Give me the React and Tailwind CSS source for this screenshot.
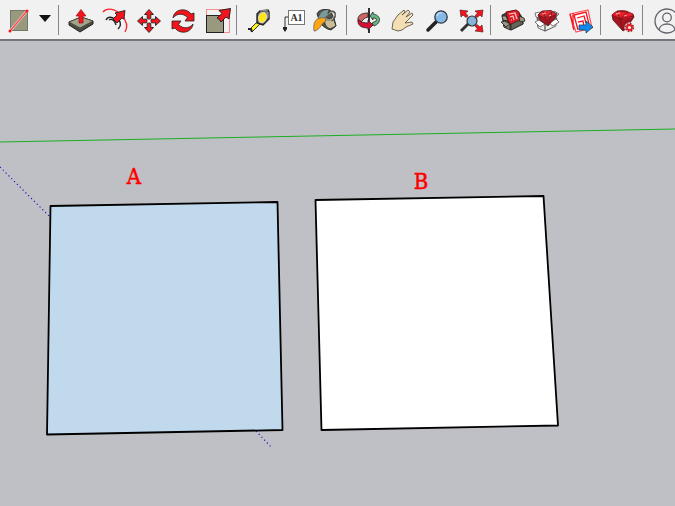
import React from "react";

const RED = "#f5141c";
const INK = "#222222";

function Tool({ label, children, className = "w-[34px]" }) {
  return (
    <button type="button" aria-label={label} title={label} className={`h-full shrink-0 ${className}`}>
      <svg viewBox="0 0 34 38" className="mx-auto block h-[38px] w-[34px]" fill="none" aria-hidden="true">
        {children}
      </svg>
    </button>
  );
}

function Separator() {
  return (
    <div className="flex h-full w-2 shrink-0 items-center pl-[2px]">
      <div className="h-[30px] w-px bg-[#858585]" />
    </div>
  );
}

function Rectangle() {
  return (
    <>
      <rect x="9.5" y="9.5" width="17" height="20" fill="#99997f" stroke="#777768" />
      <path d="M9 30L26 10" stroke="#f8e6e2" strokeWidth="2.6" />
      <path d="M9 30L26 10" stroke="#f34a50" strokeWidth="1.4" />
      <circle cx="9" cy="30" r="1.5" fill={RED} />
      <circle cx="26" cy="10" r="1.5" fill={RED} />
    </>
  );
}

function PushPull() {
  return (
    <>
      <path d="M5 21L17 16L29 20V23L16 31L5 24Z" fill="#4c4c40" stroke={INK} />
      <path d="M5 21L17 16L29 20L16 27Z" fill="#a3a28b" stroke="#45453c" strokeWidth=".8" />
      <path d="M15 22V15H12L17 8.5L22 15H19V22Z" fill={RED} stroke="#931419" strokeWidth=".7" />
    </>
  );
}

function Offset() {
  return (
    <>
      <path d="M5 11C9 6 18 8 23 14C29 20 30 26 27 31" stroke="#f8262e" strokeWidth="1.4" />
      <path d="M8 19C10 15 14 16 17 18M11 19C14 17 17 20 18 24M21 19C23 22 23 25 20 28" stroke={INK} strokeWidth="1.4" />
      <path d="M15 18L19 14L17 12L27 9.5L26 18L24 17L19 22Z" fill={RED} stroke={INK} strokeWidth=".9" />
    </>
  );
}

function Move() {
  return (
    <g fill={RED} stroke={INK} strokeWidth=".9">
      {[0, 90, 180, 270].map((a) => (
        <path key={a} transform={`rotate(${a} 17 20)`} d="M17 8.5L21.5 13.5H18.8V17.5L17 18.5L15.2 17.5V13.5H12.5Z" />
      ))}
      <circle cx="17" cy="20" r="1.6" fill="white" stroke="none" />
    </g>
  );
}

function Rotate() {
  const arrow = "M7 17C8 8 20 6 25 13L28 12V20H19L21.5 16.5C17 12 11 12 7 17Z";
  return (
    <g fill={RED} stroke={INK} strokeWidth=".8">
      <path d={arrow} />
      <path transform="rotate(180 17 20)" d={arrow} />
    </g>
  );
}

function Scale() {
  return (
    <>
      <rect x="6.5" y="8.5" width="23" height="23" stroke="#fa8b8e" />
      <rect x="6.5" y="14.5" width="17" height="17" fill="#99997f" stroke={INK} />
      <path d="M17 17L22 12.5L19 9.5L30.5 7.5L29 18L26 16L21 21L19 18Z" fill={RED} stroke={INK} />
    </>
  );
}

function TapeMeasure() {
  return (
    <>
      <path d="M8 28L16 20L19 22L10 31Z" fill="#ffef19" stroke={INK} strokeWidth=".9" />
      <path d="M6 28H9L10 31" stroke={INK} strokeWidth="2" />
      <path d="M15 13L18 10L26 9L27 11V18L21 24L15 22Z" fill="#77776e" stroke={INK} strokeWidth="1.4" />
      <ellipse cx="20.5" cy="16.5" rx="3.8" ry="5.2" transform="rotate(18 20.5 16.5)" fill="#ffe812" stroke="#e0e0d0" />
      <path d="M18 10L26 9M26 11V17" stroke="#b0b0a8" strokeWidth=".9" />
    </>
  );
}

function TextTool() {
  return (
    <>
      <path d="M12 16H9V27" stroke="#333" />
      <path d="M7 26H11V28L9 31L7 28Z" fill="#222" />
      <rect x="12.5" y="9.5" width="16" height="14" fill="white" stroke="#777" />
      <text x="20.5" y="20" textAnchor="middle" fontSize="10" fontWeight="bold" fill="#333" className="font-['Liberation_Serif',serif]">A1</text>
    </>
  );
}

function PaintBucket() {
  return (
    <>
      <path d="M7 13C9 8 15 8 20 9L24 17L26 25L21 29C16 28 12 25 10 21Z" fill="#55554d" stroke={INK} strokeWidth=".9" />
      <path d="M10 14C11 10 15 9 18 9L19 13L14 17H8Z" fill="#779c9b" />
      <path d="M15 19L21 17L24 19L26 25L20 28C16 26 14 23 15 19Z" fill="#c9bc96" stroke={INK} strokeWidth=".8" />
      <path d="M15 17C17 20 22 20 25 16" stroke="#99998c" strokeWidth="2" />
      <path d="M4 30C3 23 5 17 11 17C15 16 17 18 15 21C11 22 12 27 5 30Z" fill="#ffa512" stroke="#6c6650" strokeWidth=".8" />
      <path d="M18 13C19 9 25 10 25 13C26 17 23 17 22 20" stroke="#444" strokeWidth="1.6" />
      <path d="M19 13C20 10 24 11 24 13C25 16 22 17 22 19" stroke="#ddd8c2" strokeWidth=".8" />
    </>
  );
}

function Orbit() {
  return (
    <>
      <path d="M16 12C10 12 6 14 6 18L9 21L13 17L16 16Z" fill="#cb6561" stroke={INK} strokeWidth=".8" />
      <path d="M18 15L21 11V13C29 14 30 22 22 25L20 22L24 20C25 18 24 17 21 17V19Z" fill="#65b582" stroke={INK} strokeWidth=".8" />
      <path d="M6 18C8 21 12 22 16 22V19L21 24L16 29V27C9 27 5 24 6 18Z" fill="#d80f30" stroke={INK} strokeWidth=".8" />
      <path d="M17 7V20M17 28V32" stroke="#111" strokeWidth="1.7" />
    </>
  );
}

function Pan() {
  return (
    <path d="M6 28L7 21L12 14L18 9L19 11L16 14L22 9L24 11L20 16L26 12L27 14L22 19L19 22L26 21L27 23L20 26L16 29L12 30Z" fill="#f4dfb5" stroke="#4a443a" strokeWidth=".8" strokeLinejoin="round" />
  );
}

function Zoom() {
  return (
    <>
      <path d="M8 29L16 21" stroke="#222" strokeWidth="3.5" strokeLinecap="round" />
      <circle cx="21" cy="16" r="6.2" fill="#85b9e5" stroke="#30383f" strokeWidth="1.3" />
      <path d="M17 15Q18 11 22 12" stroke="#bddcf4" strokeWidth="1.3" />
    </>
  );
}

function ZoomExtents() {
  return (
    <>
      <path d="M7 30L14 23" stroke="#333" strokeWidth="3" />
      <circle cx="18" cy="20" r="5" fill="#85b5dc" stroke="#333" strokeWidth="1.2" />
      <g fill={RED} stroke="#431416" strokeWidth=".6">
        <path d="M6 9L14 10L11.5 12L14 15L12 16.5L9 14L7 16Z" />
        <path d="M29 9L21 10L23.5 12L21 15L23 16.5L26 14L28 16Z" />
        <path d="M29 31L21 30L23.5 28L21 25L23 23.5L26 26L28 24Z" />
      </g>
    </>
  );
}

function Warehouse() {
  return (
    <>
      <path d="M6 14L12 11L24 13L27 18V23L15 29L8 26Z" fill="#45453e" stroke={INK} strokeWidth=".9" />
      <path d="M10 11L20 9L23 11L25 20L15 24L12 20Z" fill="#e01a24" stroke="#671217" />
      <path d="M13 13L19 12L21 18M14 16L17 15L18 19M15 19H16" stroke="#ffc9c7" strokeWidth="1.2" />
      <path d="M6 15L10 15L12 20L7 19Z" fill="#a5a18a" stroke={INK} strokeWidth=".8" />
      <path d="M7 20L14 23V29L8 26Z" fill="#807d6a" stroke={INK} strokeWidth=".7" />
      <path d="M15 23L26 18L27 23L15 29Z" fill="#66645a" stroke={INK} strokeWidth=".7" />
      <path d="M23 15L28 17L29 20L24 21ZM5 21L9 20L14 23L10 26Z" fill="#99967f" stroke={INK} strokeWidth=".8" />
    </>
  );
}

function ExtensionWarehouse() {
  return (
    <>
      <path d="M7 16L11 12L24 13L27 18L25 25L15 30L8 26Z" fill="#777" stroke="#444" strokeWidth=".8" />
      <path d="M5 12L11 11L10 17L6 16ZM24 10L29 13L26 16L23 14Z" fill="#fafafa" stroke="#555" strokeWidth=".8" />
      <path d="M8 20L15 23V30L8 27ZM15 23L26 19V25L15 30Z" fill="#eee" stroke="#555" strokeWidth=".8" />
      <path d="M5 21L9 19L15 23L10 26ZM19 22L26 18L29 21L23 25Z" fill="#fff" stroke="#555" strokeWidth=".8" />
      <path d="M8 14L12 10L21 9.5L27 13L25 17L18 25L10 19Z" fill="#a91420" stroke="#591117" strokeWidth=".8" />
      <path d="M9 14L13 10L21 10L26 13L16 18Z" fill="#df2830" />
      <path d="M8 14L15 17L26 14M13 10L15 17L18 24L22 11L15 17" stroke="#741720" strokeWidth=".8" />
      <path d="M12 13L16 12M19 15L21 14" stroke="#ff9a98" strokeWidth="1.2" />
    </>
  );
}

function LayOut() {
  return (
    <>
      <path d="M6 13L24 9L28 27L12 31Z" fill="#fff" stroke="#fa5359" strokeWidth="1.2" />
      <path d="M6 13L10 29M10 14L22 11L25 23M10 14L14 29M13 17L20 15L22 22M14 21L19 20L20 25M9 12V27" stroke={RED} strokeWidth="1.3" />
      <path d="M15 24H22V20L29 26L22 32V29H15Z" fill="#1389ed" stroke="#174467" strokeWidth=".8" />
    </>
  );
}

function ExtensionManager() {
  return (
    <>
      <path d="M6 14C9 10 14 9 20 10L27 13L28 16L20 28L17 30L7 19Z" fill="#a61520" stroke="#4b1015" strokeWidth=".8" />
      <path d="M6 14C9 10 14 9 20 10L27 13L25 17L15 18Z" fill="#e5202a" />
      <path d="M6 14L14 18L27 15M11 10L14 18L22 11M14 18L17 29L23 17M11 10L22 11" stroke="#731018" strokeWidth=".8" />
      <path d="M10 13L14 12M18 15L21 14" stroke="#ff8a88" strokeWidth="1.3" />
      <circle cx="23.5" cy="26.5" r="5" fill="#eee" />
      <circle cx="23.5" cy="26.5" r="3.8" stroke="#981b20" strokeWidth="1.7" strokeDasharray="1.7 1.25" />
      <circle cx="23.5" cy="26.5" r="2.5" fill="#eee" stroke="#e51c24" strokeWidth="1.8" />
    </>
  );
}

function Account() {
  return (
    <g stroke="#62646c" strokeWidth="1.3">
      <circle cx="19" cy="20" r="12" />
      <circle cx="19" cy="16.5" r="4.3" />
      <path d="M11 29C12 21 26 21 27 29" />
    </g>
  );
}

function Toolbar() {
  return (
    <header className="flex h-[41px] items-start overflow-hidden border-b-2 border-[#75757b] bg-[#f1f1f1]">
      <Tool label="Rectangle" className="w-9"><Rectangle /></Tool>
      <button type="button" aria-label="More shapes" className="h-full w-5 shrink-0">
        <svg viewBox="0 0 20 38" className="h-[38px] w-5" aria-hidden="true">
          <path d="M3 14H15L9 21Z" fill="#111" />
        </svg>
      </button>
      <Separator />
      <Tool label="Push/Pull"><PushPull /></Tool>
      <Tool label="Offset"><Offset /></Tool>
      <Tool label="Move"><Move /></Tool>
      <Tool label="Rotate"><Rotate /></Tool>
      <Tool label="Scale"><Scale /></Tool>
      <Separator />
      <Tool label="Tape Measure"><TapeMeasure /></Tool>
      <Tool label="Text"><TextTool /></Tool>
      <Tool label="Paint Bucket"><PaintBucket /></Tool>
      <Separator />
      <Tool label="Orbit"><Orbit /></Tool>
      <Tool label="Pan"><Pan /></Tool>
      <Tool label="Zoom"><Zoom /></Tool>
      <Tool label="Zoom Extents"><ZoomExtents /></Tool>
      <Separator />
      <Tool label="3D Warehouse"><Warehouse /></Tool>
      <Tool label="Extension Warehouse"><ExtensionWarehouse /></Tool>
      <Tool label="Send to LayOut"><LayOut /></Tool>
      <Separator />
      <Tool label="Extension Manager"><ExtensionManager /></Tool>
      <Separator />
      <Tool label="Account"><Account /></Tool>
    </header>
  );
}

function Viewport() {
  return (
    <main className="flex-1 bg-[#bfc0c5]">
      <svg viewBox="0 41 675 465" className="block w-full" role="img" aria-label="Two square faces, A and B">
        <path d="M0 142L675 129" stroke="#1cae24" />
        <path d="M0 167L50 217M256 431L272 448" stroke="#1a1ac8" strokeWidth="1.2" strokeDasharray="1.2 2.8" />
        <g stroke="#000" strokeWidth="1.8" strokeLinejoin="round">
          <path d="M50.5 206L277.5 202L282.5 430L47 434.5Z" fill="#c1d9ed" />
          <path d="M315.5 200L543.5 196L558 425.5L321.5 430Z" fill="#fff" />
        </g>
        <g fill="#ff0000" stroke="#ff0000" strokeWidth=".5" fontSize="22" textAnchor="middle" className="font-['DejaVu_Serif_Condensed','DejaVu_Serif',serif]">
          <text x="134" y="184">A</text>
          <text x="421" y="189">B</text>
        </g>
      </svg>
    </main>
  );
}

export default function App() {
  return (
    <div className="flex min-h-screen flex-col">
      <Toolbar />
      <Viewport />
    </div>
  );
}
